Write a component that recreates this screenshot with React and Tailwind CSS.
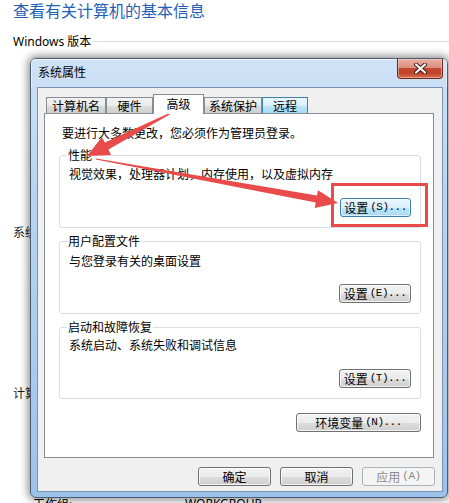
import React from 'react';
import clsx from 'clsx';

const arrow = (x1, y1, x2, y2, headLen, headW, shaftW, tailW) => {
  const dx = x2 - x1;
  const dy = y2 - y1;
  const len = Math.hypot(dx, dy);
  const ux = dx / len;
  const uy = dy / len;
  const nx = -uy;
  const ny = ux;
  const bx = x2 - ux * headLen;
  const by = y2 - uy * headLen;
  const p = (x, y) => `${x.toFixed(1)},${y.toFixed(1)}`;
  return [
    p(x1 + nx * tailW, y1 + ny * tailW),
    p(bx + nx * shaftW, by + ny * shaftW),
    p(bx + nx * headW, by + ny * headW),
    p(x2, y2),
    p(bx - nx * headW, by - ny * headW),
    p(bx - nx * shaftW, by - ny * shaftW),
    p(x1 - nx * tailW, y1 - ny * tailW),
  ].join(' ');
};

const Btn = ({ zh, hot, w, variant = 'normal' }) => (
  <div
    className={clsx(
      'h-[19px] flex items-center justify-center rounded-[3px] border text-[12px] leading-none',
      variant === 'normal' &&
        'border-[#707070] text-black bg-[linear-gradient(180deg,#f2f2f2_0%,#ebebeb_50%,#dddddd_51%,#cfcfcf_100%)] shadow-[inset_0_0_0_1px_rgba(255,255,255,0.75)]',
      variant === 'focus' &&
        'border-[#3c7fb1] text-black bg-[linear-gradient(180deg,#eaf6fd_0%,#d9f0fc_50%,#bee6fd_51%,#a7d9f5_100%)] shadow-[inset_0_0_0_1px_rgba(255,255,255,0.6)]',
      variant === 'disabled' && 'border-[#adb2b5] text-[#8a8a8a] bg-[#f4f4f4]'
    )}
    style={{ width: w }}
  >
    <span>{zh}</span>
    {hot && (
      <span className="ml-[2px] font-['Liberation_Mono',monospace] text-[11px] tracking-[-0.5px]">{hot}</span>
    )}
  </div>
);

const Group = ({ title, desc, btn, descGap, btnGap, mt }) => (
  <fieldset
    className={clsx(
      'ml-[14px] mr-[12px] border border-[#d5dfe5] rounded-[3px] pl-[9px] pr-[9px] pb-[10px]',
      mt
    )}
  >
    <legend className="-ml-[2px] px-[1px] text-[12px] leading-[16px]">{title}</legend>
    <div className={clsx('text-[12px] leading-[15px]', descGap)}>{desc}</div>
    <div className={clsx('flex justify-end', btnGap)}>{btn}</div>
  </fieldset>
);

const Tab = ({ label, w, active, hover }) => (
  <div
    className={clsx(
      'flex items-center justify-center border border-b-0 text-[12px] leading-none',
      active && 'h-[20px] -mb-px relative z-10 bg-white border-[#898c95] pb-[2px]',
      !active && !hover &&
        'h-[16px] border-[#898c95] bg-[linear-gradient(180deg,#f2f2f2_0%,#ebebeb_50%,#dddddd_51%,#cfcfcf_100%)]',
      hover && 'h-[16px] border-[#3c7fb1] bg-[linear-gradient(180deg,#eaf6fd_0%,#d9f0fc_50%,#bee6fd_51%,#a7d9f5_100%)]'
    )}
    style={{ width: w }}
  >
    {label}
  </div>
);

export default function App() {
  return (
    <div className="relative w-[449px] h-[503px] overflow-hidden bg-white text-black font-['Noto_Sans_CJK_SC','Noto_Sans',sans-serif]">
      {/* page behind the dialog */}
      <div className="pl-[13px]">
        <div className="pt-[1px] text-[16px] leading-[19px] text-[#1f5fb8]">查看有关计算机的基本信息</div>
        <div className="mt-[14px] flex items-center h-[15px] text-[12px]">
          <span className="font-['Noto_Sans','Noto_Sans_CJK_SC',sans-serif]">Windows 版本</span>
          <div className="flex-1 h-px bg-[#d5dfe5] ml-[2px]" />
        </div>
        <div className="mt-[175px] text-[12px] leading-[15px] text-[#1e1e1e]">系统</div>
        <div className="mt-[146px] text-[12px] leading-[15px] text-[#1e1e1e]">计算机名称、域和工作组设置</div>
        <div className="mt-[96px] pl-[20px] flex text-[12px] leading-[15px]">
          <span className="w-[152px]">工作组:</span>
          <span className="font-['Noto_Sans',sans-serif]">WORKGROUP</span>
        </div>
      </div>

      {/* dialog window */}
      <div className="absolute left-[30px] top-[58px] w-[418px] h-[440px] rounded-[6px] border border-[#4a5d75] shadow-[0_0_9px_2px_rgba(0,0,0,0.45)] bg-[linear-gradient(180deg,#cfe2f6_0%,#b9d4f1_30%,#aacbef_70%,#9dc2ea_100%)] flex flex-col">
        <div className="h-[28px] flex justify-between items-start rounded-t-[5px] shadow-[inset_0_1px_0_rgba(255,255,255,0.7),inset_1px_0_0_rgba(255,255,255,0.5),inset_-1px_0_0_rgba(255,255,255,0.5)]">
          <div className="pl-[7px] pt-[5px] text-[12px] leading-[15px]">系统属性</div>
          <div className="mr-[4px] w-[46px] h-[20px] rounded-b-[4px] border border-t-0 border-[#6b2b22] bg-[linear-gradient(180deg,#eab0a3_0%,#dc8f7f_45%,#c4472f_50%,#c24229_75%,#d8744f_100%)] shadow-[inset_0_0_0_1px_rgba(255,220,210,0.45)] flex items-center justify-center">
            <svg width="13" height="11" viewBox="0 0 13 11">
              <path d="M2 1.5 L11 9.5 M11 1.5 L2 9.5" stroke="#3b1712" strokeWidth="4" strokeLinecap="round" />
              <path d="M2 1.5 L11 9.5 M11 1.5 L2 9.5" stroke="#ffffff" strokeWidth="2.2" strokeLinecap="round" />
            </svg>
          </div>
        </div>

        <div className="ml-[6px] mr-[4px] h-[405px] border border-[#7a93b3] bg-[#f0f0f0] flex flex-col">
          {/* tabs */}
          <div className="h-[25px] pl-[8px] flex items-end">
            <Tab label="计算机名" w={60} />
            <Tab label="硬件" w={47} />
            <Tab label="高级" w={51} active />
            <Tab label="系统保护" w={58} />
            <Tab label="远程" w={46} hover />
          </div>

          {/* tab panel */}
          <div className="ml-[6px] mr-[8px] h-[345px] border border-[#898c95] bg-white pt-[11px]">
            <div className="pl-[17px] text-[12px] leading-[15px]">要进行大多数更改，您必须作为管理员登录。</div>
            <Group
              mt="mt-[7px]"
              title="性能"
              desc="视觉效果，处理器计划，内存使用，以及虚拟内存"
              descGap="mt-[3px]"
              btnGap="mt-[17px]"
              btn={<Btn zh="设置" hot="(S)..." w={71} variant="focus" />}
            />
            <Group
              mt="mt-[5px]"
              title="用户配置文件"
              desc="与您登录有关的桌面设置"
              descGap="mt-[4px]"
              btnGap="mt-[16px]"
              btn={<Btn zh="设置" hot="(E)..." w={72} />}
            />
            <Group
              mt="mt-[5px]"
              title="启动和故障恢复"
              desc="系统启动、系统失败和调试信息"
              descGap="mt-[2px]"
              btnGap="mt-[17px]"
              btn={<Btn zh="设置" hot="(T)..." w={72} />}
            />
            <div className="mt-[14px] mr-[12px] flex justify-end">
              <Btn zh="环境变量" hot="(N)..." w={125} />
            </div>
          </div>

          {/* dialog buttons */}
          <div className="mt-[9px] pr-[7px] flex justify-end gap-[9px]">
            <Btn zh="确定" w={73} />
            <Btn zh="取消" w={73} />
            <Btn zh="应用" hot="(A)" w={73} variant="disabled" />
          </div>
        </div>
      </div>

      {/* red annotations */}
      <svg className="absolute inset-0 pointer-events-none" width="449" height="503" viewBox="0 0 449 503">
        <polygon points={arrow(173, 112, 87, 156, 22, 10, 4, 0.6)} fill="#e94b4b" />
        <polygon points={arrow(96, 159, 338, 203, 22, 9, 3.5, 0.6)} fill="#e94b4b" />
        <rect x="332.5" y="184.5" width="94" height="41" fill="none" stroke="#e94b4b" strokeWidth="3" />
      </svg>
    </div>
  );
}
